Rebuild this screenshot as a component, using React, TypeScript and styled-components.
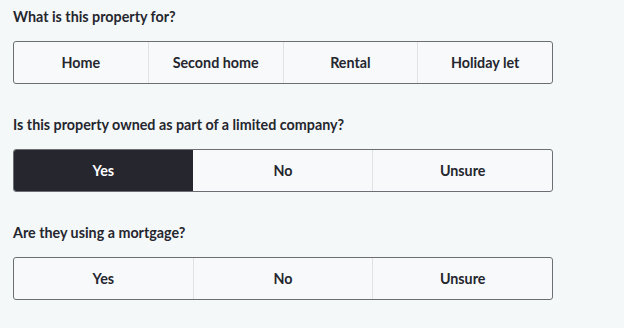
import styled, { createGlobalStyle } from "styled-components";
import { useState } from "react";

const GlobalStyle = createGlobalStyle`
  html, body {
    margin: 0;
    padding: 0;
    background: #f5f8f9;
    font-family: Lato, "Noto Sans", sans-serif;
    color: #25262e;
  }
`;

interface Question {
  title: string;
  options: string[];
  initial: string | null;
}

const questions: Question[] = [
  {
    title: "What is this property for?",
    options: ["Home", "Second home", "Rental", "Holiday let"],
    initial: null,
  },
  {
    title: "Is this property owned as part of a limited company?",
    options: ["Yes", "No", "Unsure"],
    initial: "Yes",
  },
  {
    title: "Are they using a mortgage?",
    options: ["Yes", "No", "Unsure"],
    initial: null,
  },
];

const QuestionBlock = ({ question }: { question: Question }) => {
  const [selected, setSelected] = useState<string | null>(question.initial);

  return (
    <Section>
      <Title>{question.title}</Title>
      <Toggle>
        {question.options.map((option, i) => (
          <Option
            key={option}
            type="button"
            $active={selected === option}
            $divider={i > 0 && selected !== option && selected !== question.options[i - 1]}
            onClick={() => setSelected(option)}
          >
            {option}
          </Option>
        ))}
      </Toggle>
    </Section>
  );
};

export default function App() {
  return (
    <>
      <GlobalStyle />
      <Page>
        {questions.map((q) => (
          <QuestionBlock key={q.title} question={q} />
        ))}
      </Page>
    </>
  );
}

const Page = styled.main`
  display: flex;
  flex-direction: column;
  gap: 31px;
  padding: 7px 0 0 13px;
  width: 540px;
`;

const Section = styled.section`
  display: flex;
  flex-direction: column;
  gap: 14px;
`;

const Title = styled.h2`
  margin: 0;
  font-size: 14.3px;
  line-height: 20px;
  font-weight: 700;
  color: #25262e;
`;

const Toggle = styled.div`
  display: flex;
  height: 43px;
  box-sizing: border-box;
  border: 1px solid #6b6e73;
  border-radius: 3px;
  overflow: hidden;
  background: #f7f9fa;
`;

const Option = styled.button<{ $active: boolean; $divider: boolean }>`
  flex: 1;
  border: none;
  border-left: 1px solid ${(p) => (p.$divider ? "#dfe2e5" : "transparent")};
  margin: 0;
  padding: 0;
  font-family: Lato, "Noto Sans", sans-serif;
  font-size: 14.3px;
  font-weight: 700;
  cursor: pointer;
  background: ${(p) => (p.$active ? "#25262e" : "transparent")};
  color: ${(p) => (p.$active ? "#ffffff" : "#25262e")};

  &:first-child {
    border-left: none;
  }
`;
